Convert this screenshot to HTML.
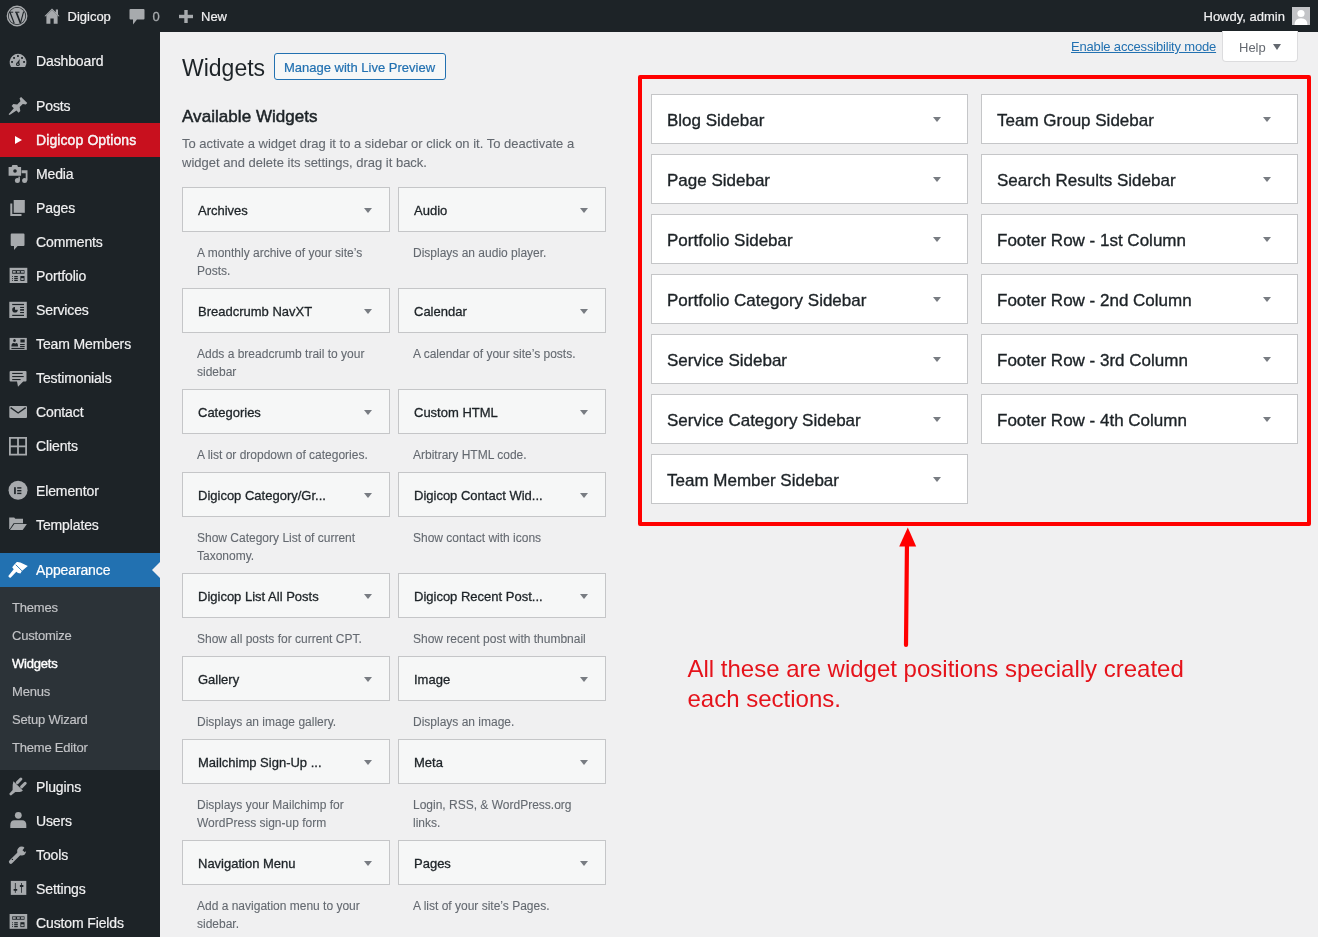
<!DOCTYPE html><html><head><meta charset="utf-8"><style>
*{margin:0;padding:0;box-sizing:border-box}
html,body{width:1318px;height:937px;overflow:hidden;background:#f0f0f1;font-family:"Liberation Sans",sans-serif;color:#3c434a}
.abs{position:absolute;white-space:nowrap}
#bar{position:absolute;left:0;top:0;width:1318px;height:32px;background:#1d2327}
#menu{position:absolute;left:0;top:32px;width:160px;height:905px;background:#1d2327}
.mi{position:absolute;left:0;width:160px;height:34px}
.mt{position:absolute;left:36px;top:8px;font-size:14px;line-height:18px;color:#f0f0f1;white-space:nowrap;letter-spacing:-0.12px;-webkit-text-stroke:0.2px}
.st{position:absolute;left:12px;font-size:13px;line-height:18px;color:#c3c4c7;white-space:nowrap;letter-spacing:-0.2px;-webkit-text-stroke:0.15px}
.wb{position:absolute;height:45px;width:208px;background:#f6f7f7;border:1px solid #c5c6c8}
.wt{position:absolute;left:15px;top:14.6px;font-size:13px;line-height:16px;color:#1d2327;-webkit-text-stroke:0.3px #1d2327;white-space:nowrap}
.tri{position:absolute;width:0;height:0;border-left:4px solid transparent;border-right:4px solid transparent;border-top:5px solid #787c82}
.wd{position:absolute;width:190px;font-size:12px;line-height:18px;color:#646970;-webkit-text-stroke:0.1px #646970}
.sb{position:absolute;width:317px;height:50px;background:#fff;border:1px solid #c5c6c8}
.sbt{position:absolute;left:15px;top:16.3px;font-size:17px;line-height:20px;color:#1d2327;white-space:nowrap;-webkit-text-stroke:0.35px #1d2327}
</style></head><body><div id="root" style="position:absolute;left:0;top:0;width:1318px;height:937px;will-change:transform">
<div id="bar">
<svg class="abs" style="left:0;top:0" width="36" height="32"><circle cx="17.05" cy="16" r="9.7" fill="none" stroke="#a7aaad" stroke-width="1.4"/><circle cx="17.05" cy="16" r="8.3" fill="#a7aaad"/><g fill="none" stroke="#1d2327" stroke-linejoin="miter"><path d="M10 12.2 L14.2 23.4" stroke-width="1.2"/><path d="M16.3 12.2 L20.5 23.2" stroke-width="1.7"/><path d="M20.5 23.2 L23.6 11.6" stroke-width="1.1"/><path d="M9 12.2 L13.2 12.2 M15 12.2 L19.4 12.2" stroke-width="1"/></g></svg>
<svg class="abs" style="left:0;top:0" width="64" height="32" fill="#a7aaad"><path d="M44.4 16.2 L52 8.4 L55.8 12.3 L55.8 9.5 L58 9.5 L58 14.6 L59.6 16.2 L58.2 16.2 L52 10.2 L45.8 16.2 Z"/><path d="M46.4 15.6 L52 10.2 L57.6 15.6 L57.6 23.8 L53.7 23.8 L53.7 18.4 L50.4 18.4 L50.4 23.8 L46.4 23.8 Z"/></svg>
<div class="abs" style="left:67.5px;top:9px;font-size:13px;line-height:16px;color:#f0f0f1;-webkit-text-stroke:0.2px #f0f0f1">Digicop</div>
<svg style="position:absolute;left:129px;top:9px" width="16" height="16" viewBox="0 0 16 16" fill="#a7aaad"><path d="M1.5 0 L14.5 0 Q15.5 0 15.5 1 L15.5 9.5 Q15.5 10.5 14.5 10.5 L8 10.5 L4 15.5 L4 10.5 L1.5 10.5 Q0.5 10.5 0.5 9.5 L0.5 1 Q0.5 0 1.5 0 Z"/></svg>
<div class="abs" style="left:152.5px;top:9px;line-height:16px;color:#a7aaad;font-size:13px;-webkit-text-stroke:0.3px #a7aaad">0</div>
<svg style="position:absolute;left:179px;top:10px" width="14" height="13" viewBox="0 0 14 13" fill="#a7aaad"><rect x="5.3" y="0" width="3.4" height="13"/><rect x="0" y="4.8" width="14" height="3.4"/></svg>
<div class="abs" style="left:201px;top:9px;font-size:13px;line-height:16px;color:#f0f0f1;-webkit-text-stroke:0.2px #f0f0f1">New</div>
<div class="abs" style="left:1203.5px;top:9px;font-size:13px;line-height:16px;color:#f0f0f1;-webkit-text-stroke:0.2px #f0f0f1">Howdy, admin</div>
<div class="abs" style="left:1292px;top:7px;width:18px;height:18px;background:#c3c4c7;overflow:hidden"><svg width="18" height="18" viewBox="0 0 18 18"><circle cx="9" cy="6.5" r="3.6" fill="#fff"/><path d="M2.5 18 Q2.5 11.2 9 11.2 Q15.5 11.2 15.5 18 Z" fill="#fff"/></svg></div>
</div>
<div id="menu"></div>
<div class="mi" style="top:44px;">
<svg style="position:absolute;left:0px;top:0px" width="36" height="34" viewBox="0 0 36 34" fill="#a7aaad"><path d="M11 22.9 A8.45 8.45 0 1 1 25.1 22.9 Z"/><g fill="#1d2327"><rect x="17.05" y="11.15" width="1.8" height="1.8"/><rect x="13.15" y="13.05" width="1.8" height="1.8"/><rect x="21.15" y="13.05" width="1.8" height="1.8"/><rect x="11.15" y="17.05" width="1.8" height="1.8"/><rect x="23.15" y="17.05" width="1.8" height="1.8"/><path d="M19.9 15 L19.2 19.2 L17 18.6 Z"/><circle cx="17.9" cy="20.2" r="1.9"/></g><circle cx="17.9" cy="20.2" r="0.8"/></svg>
<div class="mt" style="color:#f0f0f1;">Dashboard</div>
</div>
<div class="mi" style="top:89px;">
<svg style="position:absolute;left:0px;top:0px" width="36" height="34" viewBox="0 0 36 34" fill="#a7aaad"><path d="M8.6 25.3 L13.8 19.2 L11.6 17 L13.3 15.1 L17.2 15.5 L20.4 12.3 L19.6 9.3 L21.1 7.9 L27.3 14.1 L25.8 15.6 L22.8 14.9 L19.7 18.1 L20.3 22 L18.6 23.7 L16.5 21.5 L9.6 26 Z"/></svg>
<div class="mt" style="color:#f0f0f1;">Posts</div>
</div>
<div class="mi" style="top:123px;background:#c8101e;">
<div style="position:absolute;left:15px;top:12.5px;width:0;height:0;border-top:4.2px solid transparent;border-bottom:4.2px solid transparent;border-left:7.5px solid #fff"></div>
<div class="mt" style="color:#f0f0f1;-webkit-text-stroke:0.4px #fff;letter-spacing:0.1px;">Digicop Options</div>
</div>
<div class="mi" style="top:157px;">
<svg style="position:absolute;left:0px;top:0px" width="36" height="34" viewBox="0 0 36 34" fill="#a7aaad"><path d="M8.6 10.1 L11.6 10.1 L12.4 8.1 L17.2 8.1 L18 10.1 L21.1 10.1 L21.1 18.8 L8.6 18.8 Z"/><circle cx="15" cy="14" r="1.8" fill="#1d2327"/><path d="M21.6 13.2 L27.5 13.2 L27.5 23.5 L25.7 23.5 L25.7 16.3 L21.6 16.3 Z"/><rect x="18.4" y="19.6" width="1.5" height="3.5"/><circle cx="17.4" cy="23.4" r="2.5"/><circle cx="24.6" cy="23.4" r="2.5"/></svg>
<div class="mt" style="color:#f0f0f1;">Media</div>
</div>
<div class="mi" style="top:191px;">
<svg style="position:absolute;left:0px;top:0px" width="36" height="34" viewBox="0 0 36 34" fill="#a7aaad"><rect x="13.7" y="9" width="11.1" height="12.8"/><path d="M10.3 12.5 L12.3 12.5 L12.3 23 L21.5 23 L21.5 25 L10.3 25 Z"/></svg>
<div class="mt" style="color:#f0f0f1;">Pages</div>
</div>
<div class="mi" style="top:225px;">
<svg style="position:absolute;left:0px;top:0px" width="36" height="34" viewBox="0 0 36 34" fill="#a7aaad"><path d="M11.7 8.6 L23.5 8.6 Q24.5 8.6 24.5 9.6 L24.5 20 Q24.5 21 23.5 21 L17.6 21 L14 25 L14 21 L11.7 21 Q10.7 21 10.7 20 L10.7 9.6 Q10.7 8.6 11.7 8.6 Z"/></svg>
<div class="mt" style="color:#f0f0f1;">Comments</div>
</div>
<div class="mi" style="top:259px;">
<svg style="position:absolute;left:0px;top:0px" width="36" height="34" viewBox="0 0 36 34" fill="#a7aaad"><rect x="9.6" y="8.8" width="17.7" height="15.2"/><g fill="#1d2327"><rect x="12.2" y="11.2" width="12.3" height="3.5"/><rect x="12.1" y="17.1" width="0.9" height="0.9"/><rect x="12.1" y="19" width="0.9" height="0.9"/><rect x="12.1" y="20.9" width="0.9" height="0.9"/><rect x="14.2" y="17" width="3.6" height="1.2"/><rect x="14.2" y="18.9" width="3.6" height="1.2"/><rect x="14.2" y="20.8" width="3.6" height="1.2"/><rect x="20.4" y="17" width="4.1" height="4.9"/></g><rect x="12.9" y="12.1" width="2.8" height="1.6"/><rect x="17" y="12.1" width="2.8" height="1.6"/><rect x="20.9" y="12.1" width="3" height="1.6"/><rect x="21.2" y="19.2" width="2.5" height="1.8"/></svg>
<div class="mt" style="color:#f0f0f1;">Portfolio</div>
</div>
<div class="mi" style="top:293px;">
<svg style="position:absolute;left:0px;top:0px" width="36" height="34" viewBox="0 0 36 34" fill="#a7aaad"><rect x="9.3" y="8.8" width="17.5" height="16.2"/><g fill="#1d2327"><rect x="12.2" y="10.9" width="11.8" height="1.2"/><rect x="12.2" y="21.8" width="11.8" height="1.2"/><path d="M15 14 A2.8 2.8 0 1 0 17.8 16.8 L15 16.8 Z"/><path d="M15.6 13.4 L15.6 16.2 L18.4 16.2 A2.8 2.8 0 0 0 15.6 13.4 Z" fill="#a7aaad"/><rect x="20.1" y="13.9" width="3.9" height="1.1"/><rect x="20.1" y="16.1" width="3.9" height="1.6"/><rect x="20.1" y="19" width="3.9" height="1.1"/></g></svg>
<div class="mt" style="color:#f0f0f1;">Services</div>
</div>
<div class="mi" style="top:327px;">
<svg style="position:absolute;left:0px;top:0px" width="36" height="34" viewBox="0 0 36 34" fill="#a7aaad"><rect x="9.6" y="10.9" width="17.2" height="12"/><g fill="#1d2327"><ellipse cx="14.5" cy="13.5" rx="1.3" ry="1.6"/><path d="M11.4 19.6 Q11.4 16 13.5 16 L15.6 16.6 L16.6 16 Q18 16 18 19.6 Z"/><rect x="20.4" y="12.4" width="4.3" height="3.1"/><rect x="20.1" y="17" width="4.6" height="1.1"/><rect x="20.1" y="19" width="4.6" height="1.1"/><rect x="11.4" y="20.9" width="13.1" height="1.1"/></g></svg>
<div class="mt" style="color:#f0f0f1;">Team Members</div>
</div>
<div class="mi" style="top:361px;">
<svg style="position:absolute;left:0px;top:0px" width="36" height="34" viewBox="0 0 36 34" fill="#a7aaad"><path d="M10.6 9.9 L25.5 9.9 Q26.5 9.9 26.5 10.9 L26.5 19.6 Q26.5 20.6 25.5 20.6 L23.2 20.6 L18 25.8 L17 20.6 L10.6 20.6 Q9.6 20.6 9.6 19.6 L9.6 10.9 Q9.6 9.9 10.6 9.9 Z"/><g fill="#1d2327"><rect x="12.2" y="11.9" width="10.5" height="1.1"/><rect x="12.2" y="15" width="11.5" height="1.1"/><rect x="12.2" y="18" width="8.4" height="1.1"/></g></svg>
<div class="mt" style="color:#f0f0f1;">Testimonials</div>
</div>
<div class="mi" style="top:395px;">
<svg style="position:absolute;left:0px;top:0px" width="36" height="34" viewBox="0 0 36 34" fill="#a7aaad"><rect x="9.3" y="11" width="17.7" height="12" rx="1"/><path d="M10.6 12.6 L18.15 18 L25.7 12.6" stroke="#1d2327" stroke-width="1.4" fill="none"/></svg>
<div class="mt" style="color:#f0f0f1;">Contact</div>
</div>
<div class="mi" style="top:429px;">
<svg style="position:absolute;left:0px;top:0px" width="36" height="34" viewBox="0 0 36 34" fill="#a7aaad"><path d="M9 8 L27 8 L27 26.6 L9 26.6 Z M10.8 9.8 L10.8 16.4 L17.1 16.4 L17.1 9.8 Z M18.9 9.8 L18.9 16.4 L25.2 16.4 L25.2 9.8 Z M10.8 18.2 L10.8 24.8 L17.1 24.8 L17.1 18.2 Z M18.9 18.2 L18.9 24.8 L25.2 24.8 L25.2 18.2 Z" fill-rule="evenodd"/></svg>
<div class="mt" style="color:#f0f0f1;">Clients</div>
</div>
<div class="mi" style="top:474px;">
<svg style="position:absolute;left:0px;top:0px" width="36" height="34" viewBox="0 0 36 34" fill="#a7aaad"><circle cx="18.05" cy="16.3" r="9.5"/><g fill="#1d2327"><rect x="14.1" y="13.2" width="1.7" height="6.9"/><rect x="17.2" y="13.2" width="4.2" height="1.4"/><rect x="17.2" y="16" width="4.2" height="1.4"/><rect x="17.2" y="18.7" width="4.2" height="1.4"/></g></svg>
<div class="mt" style="color:#f0f0f1;">Elementor</div>
</div>
<div class="mi" style="top:508px;">
<svg style="position:absolute;left:0px;top:0px" width="36" height="34" viewBox="0 0 36 34" fill="#a7aaad"><path d="M9.2 9.4 L14.2 9.4 L15.3 10.8 L23 10.8 L23 15.2 L13.6 15.2 L9.8 21 L9.2 21 Z"/><path d="M14.3 15.9 L26.9 15.9 L22.7 21.9 L10 21.9 Z"/></svg>
<div class="mt" style="color:#f0f0f1;">Templates</div>
</div>
<div class="mi" style="top:553px;background:#2271b1;">
<svg style="position:absolute;left:0px;top:0px" width="36" height="34" viewBox="0 0 36 34" fill="#fff"><path d="M16.8 9.1 Q18.5 8.9 20.4 9.6 L27.8 12.9 L21.9 18.1 L20.4 20.4 L18 20.1 L16.3 18.8 L10.6 24.7 Q8.9 25.1 8.3 23.1 L13.7 16.3 L12.2 14.2 L14.2 11.7 Z"/><path d="M15.7 11.7 L21.9 17.8" stroke="#2271b1" stroke-width="0.9"/></svg>
<div class="mt" style="color:#fff;">Appearance</div>
<div style="position:absolute;left:152px;top:9px;width:0;height:0;border-top:8px solid transparent;border-bottom:8px solid transparent;border-right:8px solid #f0f0f1"></div>
</div>
<div class="mi" style="top:770px;">
<svg style="position:absolute;left:0px;top:0px" width="36" height="34" viewBox="0 0 36 34" fill="#a7aaad"><path d="M13.4 11.2 L22.9 20.4 Q21.8 21.8 19.8 21.9 L15.3 21.9 L11 25.6 Q9.6 25.3 9.3 23.8 L12.6 19.9 L12.7 14.8 Z"/><path d="M17.3 12.6 L20.9 9" stroke="#a7aaad" stroke-width="3" stroke-linecap="round"/><path d="M21.6 16.9 L25.2 13.3" stroke="#a7aaad" stroke-width="3" stroke-linecap="round"/></svg>
<div class="mt" style="color:#f0f0f1;">Plugins</div>
</div>
<div class="mi" style="top:804px;">
<svg style="position:absolute;left:0px;top:0px" width="36" height="34" viewBox="0 0 36 34" fill="#a7aaad"><circle cx="18.3" cy="11.3" r="3.4"/><path d="M10.3 24 L10.3 21 Q10.3 16.2 14.5 16.2 L22.1 16.2 Q26.3 16.2 26.3 21 L26.3 24 Z"/></svg>
<div class="mt" style="color:#f0f0f1;">Users</div>
</div>
<div class="mi" style="top:838px;">
<svg style="position:absolute;left:0px;top:0px" width="36" height="34" viewBox="0 0 36 34" fill="#a7aaad"><path d="M21.6 13.1 L10.8 23.9" stroke="#a7aaad" stroke-width="3.8" stroke-linecap="round"/><circle cx="21.6" cy="13.1" r="4.5"/><path d="M22.5 12.2 L25.2 8.8 L28 11.2 L24.8 14.3 Z" fill="#1d2327"/><circle cx="12.4" cy="21.4" r="0.7" fill="#1d2327"/></svg>
<div class="mt" style="color:#f0f0f1;">Tools</div>
</div>
<div class="mi" style="top:872px;">
<svg style="position:absolute;left:0px;top:0px" width="36" height="34" viewBox="0 0 36 34" fill="#a7aaad"><rect x="10.8" y="8.9" width="15.5" height="14"/><g fill="#1d2327"><rect x="14.9" y="11" width="0.8" height="9.8"/><rect x="13.5" y="16.9" width="3.8" height="1.8" rx="0.6"/><rect x="21.1" y="11" width="0.8" height="9.8"/><rect x="19.8" y="13.1" width="3.7" height="1.8" rx="0.6"/></g></svg>
<div class="mt" style="color:#f0f0f1;">Settings</div>
</div>
<div class="mi" style="top:906px;">
<svg style="position:absolute;left:0px;top:0px" width="36" height="34" viewBox="0 0 36 34" fill="#a7aaad"><g transform="translate(0,-0.8)"><rect x="9.6" y="8.8" width="17.6" height="14.8"/><g fill="#1d2327"><rect x="12.2" y="11.2" width="12.3" height="3.3"/><rect x="12.1" y="17.1" width="0.9" height="0.9"/><rect x="12.1" y="19" width="0.9" height="0.9"/><rect x="12.1" y="20.9" width="0.9" height="0.9"/><rect x="14.2" y="17" width="3.6" height="1.2"/><rect x="14.2" y="18.9" width="3.6" height="1.2"/><rect x="14.2" y="20.8" width="3.6" height="1.2"/><rect x="20.4" y="17" width="4.1" height="4.9"/></g><rect x="12.9" y="12" width="2.8" height="1.6"/><rect x="17" y="12" width="2.8" height="1.6"/><rect x="20.9" y="12" width="3" height="1.6"/><rect x="21.2" y="19.2" width="2.5" height="1.8"/></g></svg>
<div class="mt" style="color:#f0f0f1;">Custom Fields</div>
</div>
<div style="position:absolute;left:0;top:587px;width:160px;height:183px;background:#2c3338"></div>
<div class="st" style="top:599.0px;">Themes</div>
<div class="st" style="top:627.0px;">Customize</div>
<div class="st" style="top:655.0px;color:#fff;-webkit-text-stroke:0.4px #fff;">Widgets</div>
<div class="st" style="top:683.0px;">Menus</div>
<div class="st" style="top:711.0px;">Setup Wizard</div>
<div class="st" style="top:739.0px;">Theme Editor</div>
<div class="abs" style="left:182px;top:54px;font-size:23px;line-height:29px;color:#1d2327">Widgets</div>
<div class="abs" style="left:274px;top:53px;width:172px;height:27px;border:1px solid #2271b1;border-radius:3px;background:#f6f7f7"></div>
<div class="abs" style="left:284px;top:59.5px;font-size:13px;line-height:16px;color:#2271b1;-webkit-text-stroke:0.2px #2271b1">Manage with Live Preview</div>
<div class="abs" style="left:1071px;top:39px;font-size:13px;line-height:16px;color:#2271b1;text-decoration:underline;letter-spacing:-0.18px">Enable accessibility mode</div>
<div class="abs" style="left:1222px;top:31px;width:76px;height:31px;background:#fff;border:1px solid #dcdcde;border-top:none;border-radius:0 0 4px 4px"></div>
<div class="abs" style="left:1239px;top:40px;font-size:13px;line-height:16px;color:#646970">Help</div>
<div class="abs" style="left:1273px;top:44px;width:0;height:0;border-left:4px solid transparent;border-right:4px solid transparent;border-top:6px solid #646970"></div>
<div class="abs" style="left:182px;top:107px;font-size:17px;line-height:20px;color:#1d2327;-webkit-text-stroke:0.5px #1d2327;letter-spacing:0.05px">Available Widgets</div>
<div class="abs" style="left:182px;top:135px;font-size:13px;line-height:18.5px;color:#646970;-webkit-text-stroke:0.1px #646970">To activate a widget drag it to a sidebar or click on it. To deactivate a<br>widget and delete its settings, drag it back.</div>
<div class="wb" style="left:182px;top:187px"><div class="wt">Archives</div><div class="tri" style="left:181px;top:20px"></div></div>
<div class="wd" style="left:197px;top:244px">A monthly archive of your site’s<br>Posts.</div>
<div class="wb" style="left:398px;top:187px"><div class="wt">Audio</div><div class="tri" style="left:181px;top:20px"></div></div>
<div class="wd" style="left:413px;top:244px">Displays an audio player.</div>
<div class="wb" style="left:182px;top:288px"><div class="wt">Breadcrumb NavXT</div><div class="tri" style="left:181px;top:20px"></div></div>
<div class="wd" style="left:197px;top:345px">Adds a breadcrumb trail to your<br>sidebar</div>
<div class="wb" style="left:398px;top:288px"><div class="wt">Calendar</div><div class="tri" style="left:181px;top:20px"></div></div>
<div class="wd" style="left:413px;top:345px">A calendar of your site’s posts.</div>
<div class="wb" style="left:182px;top:389px"><div class="wt">Categories</div><div class="tri" style="left:181px;top:20px"></div></div>
<div class="wd" style="left:197px;top:446px">A list or dropdown of categories.</div>
<div class="wb" style="left:398px;top:389px"><div class="wt">Custom HTML</div><div class="tri" style="left:181px;top:20px"></div></div>
<div class="wd" style="left:413px;top:446px">Arbitrary HTML code.</div>
<div class="wb" style="left:182px;top:472px"><div class="wt">Digicop Category/Gr...</div><div class="tri" style="left:181px;top:20px"></div></div>
<div class="wd" style="left:197px;top:529px">Show Category List of current<br>Taxonomy.</div>
<div class="wb" style="left:398px;top:472px"><div class="wt">Digicop Contact Wid...</div><div class="tri" style="left:181px;top:20px"></div></div>
<div class="wd" style="left:413px;top:529px">Show contact with icons</div>
<div class="wb" style="left:182px;top:573px"><div class="wt">Digicop List All Posts</div><div class="tri" style="left:181px;top:20px"></div></div>
<div class="wd" style="left:197px;top:630px">Show all posts for current CPT.</div>
<div class="wb" style="left:398px;top:573px"><div class="wt">Digicop Recent Post...</div><div class="tri" style="left:181px;top:20px"></div></div>
<div class="wd" style="left:413px;top:630px">Show recent post with thumbnail</div>
<div class="wb" style="left:182px;top:656px"><div class="wt">Gallery</div><div class="tri" style="left:181px;top:20px"></div></div>
<div class="wd" style="left:197px;top:713px">Displays an image gallery.</div>
<div class="wb" style="left:398px;top:656px"><div class="wt">Image</div><div class="tri" style="left:181px;top:20px"></div></div>
<div class="wd" style="left:413px;top:713px">Displays an image.</div>
<div class="wb" style="left:182px;top:739px"><div class="wt">Mailchimp Sign-Up ...</div><div class="tri" style="left:181px;top:20px"></div></div>
<div class="wd" style="left:197px;top:796px">Displays your Mailchimp for<br>WordPress sign-up form</div>
<div class="wb" style="left:398px;top:739px"><div class="wt">Meta</div><div class="tri" style="left:181px;top:20px"></div></div>
<div class="wd" style="left:413px;top:796px">Login, RSS, &amp; WordPress.org<br>links.</div>
<div class="wb" style="left:182px;top:840px"><div class="wt">Navigation Menu</div><div class="tri" style="left:181px;top:20px"></div></div>
<div class="wd" style="left:197px;top:897px">Add a navigation menu to your<br>sidebar.</div>
<div class="wb" style="left:398px;top:840px"><div class="wt">Pages</div><div class="tri" style="left:181px;top:20px"></div></div>
<div class="wd" style="left:413px;top:897px">A list of your site’s Pages.</div>
<div class="sb" style="left:651px;top:94px"><div class="sbt">Blog Sidebar</div><div class="tri" style="left:281px;top:22px"></div></div>
<div class="sb" style="left:981px;top:94px"><div class="sbt">Team Group Sidebar</div><div class="tri" style="left:281px;top:22px"></div></div>
<div class="sb" style="left:651px;top:154px"><div class="sbt">Page Sidebar</div><div class="tri" style="left:281px;top:22px"></div></div>
<div class="sb" style="left:981px;top:154px"><div class="sbt">Search Results Sidebar</div><div class="tri" style="left:281px;top:22px"></div></div>
<div class="sb" style="left:651px;top:214px"><div class="sbt">Portfolio Sidebar</div><div class="tri" style="left:281px;top:22px"></div></div>
<div class="sb" style="left:981px;top:214px"><div class="sbt">Footer Row - 1st Column</div><div class="tri" style="left:281px;top:22px"></div></div>
<div class="sb" style="left:651px;top:274px"><div class="sbt">Portfolio Category Sidebar</div><div class="tri" style="left:281px;top:22px"></div></div>
<div class="sb" style="left:981px;top:274px"><div class="sbt">Footer Row - 2nd Column</div><div class="tri" style="left:281px;top:22px"></div></div>
<div class="sb" style="left:651px;top:334px"><div class="sbt">Service Sidebar</div><div class="tri" style="left:281px;top:22px"></div></div>
<div class="sb" style="left:981px;top:334px"><div class="sbt">Footer Row - 3rd Column</div><div class="tri" style="left:281px;top:22px"></div></div>
<div class="sb" style="left:651px;top:394px"><div class="sbt">Service Category Sidebar</div><div class="tri" style="left:281px;top:22px"></div></div>
<div class="sb" style="left:981px;top:394px"><div class="sbt">Footer Row - 4th Column</div><div class="tri" style="left:281px;top:22px"></div></div>
<div class="sb" style="left:651px;top:454px"><div class="sbt">Team Member Sidebar</div><div class="tri" style="left:281px;top:22px"></div></div>
<div class="abs" style="left:638px;top:75px;width:673px;height:451px;border:4px solid #f00;border-radius:2px"></div>
<svg class="abs" style="left:0;top:0" width="1318" height="937"><path d="M907 540 L906 645" stroke="#f00" stroke-width="4.2" stroke-linecap="round"/><path d="M907.8 527.5 L899.2 546.6 L916.2 546.6 Z" fill="#f00"/></svg>
<div class="abs" style="left:687.5px;top:654.2px;font-size:24px;line-height:30px;color:#e5131b">All these are widget positions specially created<br>each sections.</div>
</div></body></html>
